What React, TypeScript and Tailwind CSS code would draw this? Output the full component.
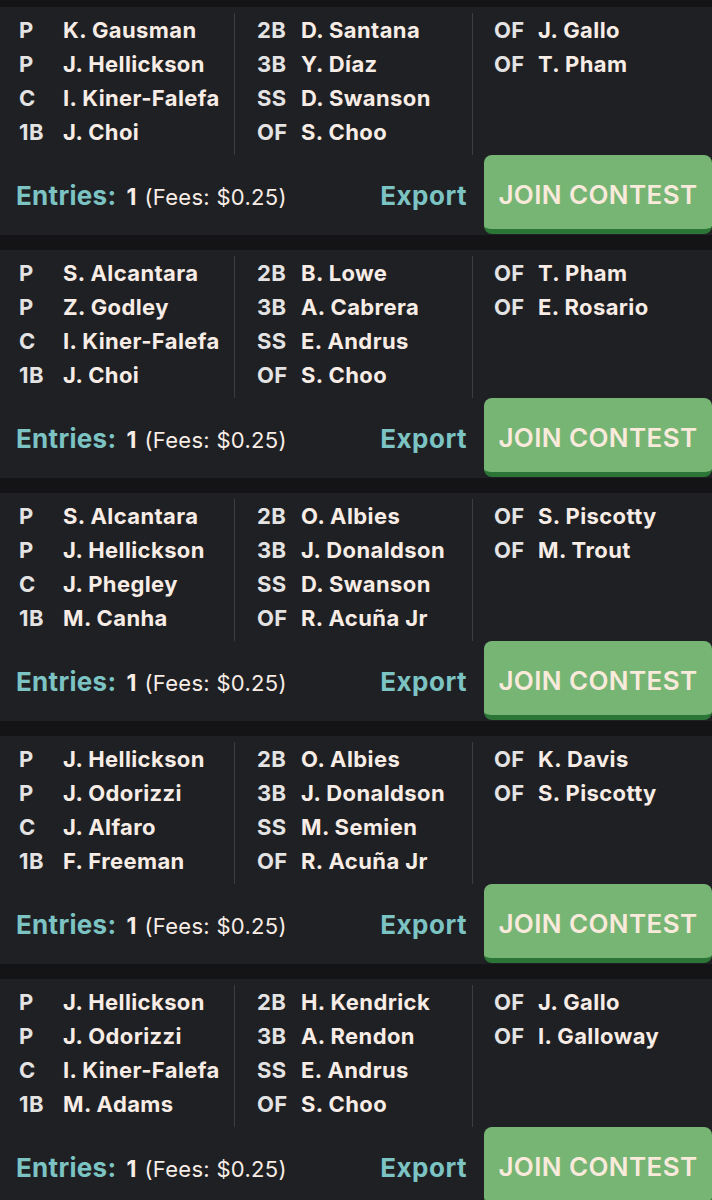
import React from "react";

type Slot = [string, string];

type Lineup = {
  cols: Slot[][];
};

const lineups: Lineup[] = [
  {
    cols: [
      [["P", "K. Gausman"], ["P", "J. Hellickson"], ["C", "I. Kiner-Falefa"], ["1B", "J. Choi"]],
      [["2B", "D. Santana"], ["3B", "Y. Díaz"], ["SS", "D. Swanson"], ["OF", "S. Choo"]],
      [["OF", "J. Gallo"], ["OF", "T. Pham"]],
    ],
  },
  {
    cols: [
      [["P", "S. Alcantara"], ["P", "Z. Godley"], ["C", "I. Kiner-Falefa"], ["1B", "J. Choi"]],
      [["2B", "B. Lowe"], ["3B", "A. Cabrera"], ["SS", "E. Andrus"], ["OF", "S. Choo"]],
      [["OF", "T. Pham"], ["OF", "E. Rosario"]],
    ],
  },
  {
    cols: [
      [["P", "S. Alcantara"], ["P", "J. Hellickson"], ["C", "J. Phegley"], ["1B", "M. Canha"]],
      [["2B", "O. Albies"], ["3B", "J. Donaldson"], ["SS", "D. Swanson"], ["OF", "R. Acuña Jr"]],
      [["OF", "S. Piscotty"], ["OF", "M. Trout"]],
    ],
  },
  {
    cols: [
      [["P", "J. Hellickson"], ["P", "J. Odorizzi"], ["C", "J. Alfaro"], ["1B", "F. Freeman"]],
      [["2B", "O. Albies"], ["3B", "J. Donaldson"], ["SS", "M. Semien"], ["OF", "R. Acuña Jr"]],
      [["OF", "K. Davis"], ["OF", "S. Piscotty"]],
    ],
  },
  {
    cols: [
      [["P", "J. Hellickson"], ["P", "J. Odorizzi"], ["C", "I. Kiner-Falefa"], ["1B", "M. Adams"]],
      [["2B", "H. Kendrick"], ["3B", "A. Rendon"], ["SS", "E. Andrus"], ["OF", "S. Choo"]],
      [["OF", "J. Gallo"], ["OF", "I. Galloway"]],
    ],
  },
];

const colClass = [
  "pl-[19px]",
  "border-l border-[#3c3d41] pl-[22px]",
  "border-l border-[#3c3d41] pl-[21px]",
];

function SlotRow({ slot }: { slot: Slot }) {
  return (
    <div className="flex items-center h-[34px] text-[22px] font-bold tracking-[0.4px] whitespace-nowrap">
      <span className="w-[44px] text-[#e4e3e3]">{slot[0]}</span>
      <span className="text-[#f8ede6]">{slot[1]}</span>
    </div>
  );
}

function LineupCard({ lineup }: { lineup: Lineup }) {
  return (
    <div className="bg-[#1f2023] h-[228px] flex flex-col">
      <div className="grid grid-cols-[234px_238px_1fr] pt-[6px] h-[148px]">
        {lineup.cols.map((col, i) => (
          <div key={i} className={colClass[i]}>
            {col.map((slot, j) => (
              <SlotRow key={j} slot={slot} />
            ))}
          </div>
        ))}
      </div>
      <div className="flex items-start h-[80px]">
        <div className="flex items-baseline h-[80px] pt-[21px] pl-[16px] whitespace-nowrap">
          <span className="text-[26px] font-bold tracking-[0.3px] text-[#7cc3c3]">Entries:</span>
          <span className="ml-[10px] text-[23px] font-bold text-[#f8ede6]">1</span>
          <span className="ml-[8px] text-[22px] tracking-[0.3px] text-[#f8ede6]">(Fees: $0.25)</span>
        </div>
        <span className="ml-auto pt-[21px] text-[26px] font-bold tracking-[0.5px] text-[#7cc3c3]">Export</span>
        <button className="ml-[17px] w-[228px] h-[79px] pt-[4px] rounded-[8px] bg-[#77b575] border-b-[5px] border-[#2b7536] text-[26px] font-semibold tracking-[0.4px] text-[#f9eadc] whitespace-nowrap">
          JOIN CONTEST
        </button>
      </div>
    </div>
  );
}

export default function App() {
  return (
    <div
      className="w-[712px] min-h-[1200px] bg-[#141316] pt-[7px] flex flex-col gap-[15px]"
      style={{ fontFamily: "Inter, 'Noto Sans', sans-serif" }}
    >
      {lineups.map((l, i) => (
        <LineupCard key={i} lineup={l} />
      ))}
    </div>
  );
}
